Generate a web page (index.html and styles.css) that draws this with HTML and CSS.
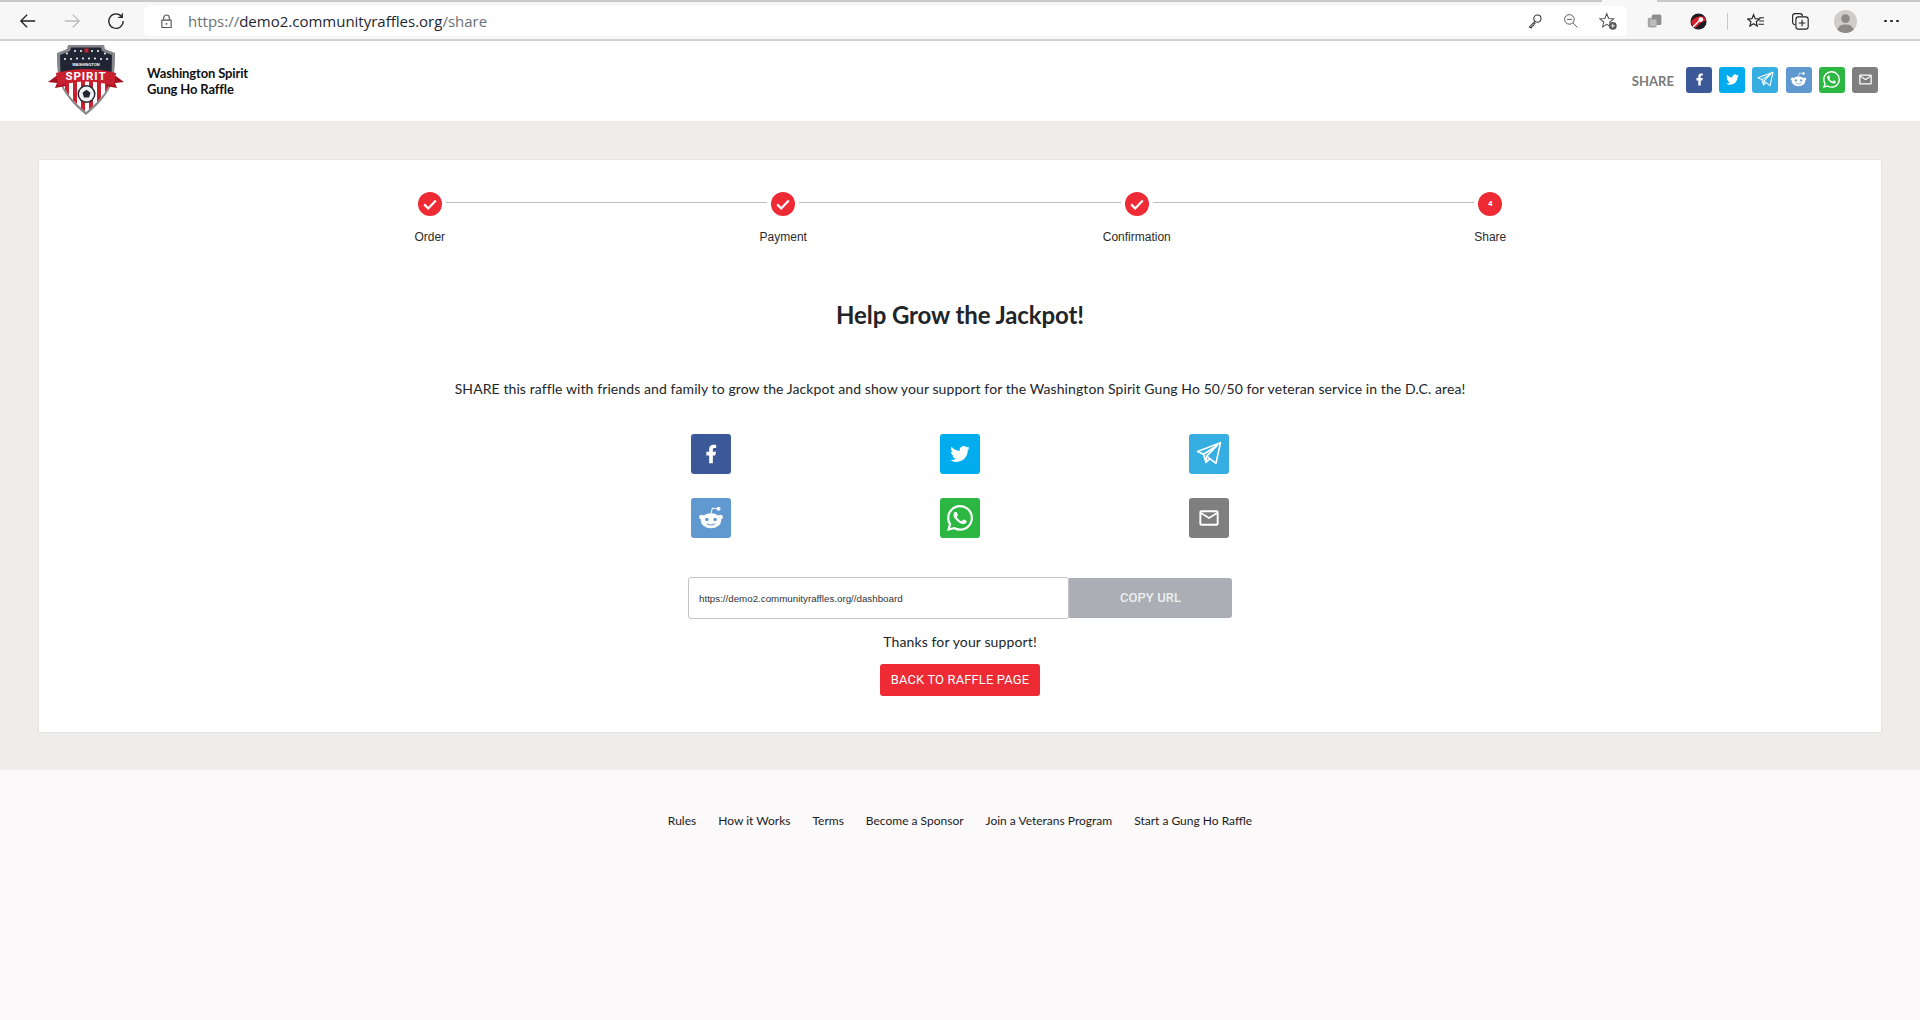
FILE: index.html
```html
<!DOCTYPE html>
<html lang="en">
<head>
<meta charset="utf-8">
<title>Share - Washington Spirit Gung Ho Raffle</title>
<link rel="stylesheet" href="styles.css">
</head>
<body>
<svg class="defs" aria-hidden="true">
  <symbol id="i-fb" viewBox="-2 -2 28 28"><path fill="#fff" d="M14 13.5h2.5l1-4H14v-2c0-1.03 0-2 2-2h1.5V2.14c-.326-.043-1.557-.14-2.857-.14C11.928 2 10 3.657 10 6.7v2.8H7v4h3V22h4v-8.5z"/></symbol>
  <symbol id="i-tw" viewBox="-4 -4 32 32"><path fill="#fff" d="M23.953 4.57a10 10 0 01-2.825.775 4.958 4.958 0 002.163-2.723c-.951.555-2.005.959-3.127 1.184a4.92 4.92 0 00-8.384 4.482C7.69 8.095 4.067 6.13 1.64 3.162a4.822 4.822 0 00-.666 2.475c0 1.71.87 3.213 2.188 4.096a4.904 4.904 0 01-2.228-.616v.06a4.923 4.923 0 003.946 4.827 4.996 4.996 0 01-2.212.085 4.936 4.936 0 004.604 3.417 9.867 9.867 0 01-6.102 2.105c-.39 0-.779-.023-1.17-.067a13.995 13.995 0 007.557 2.209c9.053 0 13.998-7.496 13.998-13.985 0-.21 0-.42-.015-.63A9.935 9.935 0 0024 4.59z"/></symbol>
  <symbol id="i-tg" viewBox="0 0 24 24"><path fill="none" stroke="#fff" stroke-width="1.5" stroke-linejoin="round" d="M22.6 1.6 1.4 9.6l5.6 2.6L19.6 4 9.8 14l8.6 6.6zM7 12.2l2.2 7.6.6-5.8M9.2 19.8l3.4-3.3"/></symbol>
  <symbol id="i-rd" viewBox="0 0 24 24">
    <ellipse cx="12" cy="14.6" rx="9.4" ry="6.9" fill="#fff"/>
    <circle cx="3.4" cy="11.4" r="2.3" fill="#fff"/><circle cx="20.6" cy="11.4" r="2.3" fill="#fff"/>
    <circle cx="19" cy="3.4" r="1.8" fill="#fff"/>
    <path fill="none" stroke="#fff" stroke-width=".9" d="M12 8l1.3-5.2L18 3.6"/>
    <circle cx="8.2" cy="13.4" r="1.6" fill="#5f99cf"/><circle cx="15.8" cy="13.4" r="1.6" fill="#5f99cf"/>
    <path fill="none" stroke="#5f99cf" stroke-width="1" stroke-linecap="round" d="M8.6 17.4c2 1.3 4.8 1.3 6.8 0"/>
  </symbol>
  <symbol id="i-wa" viewBox="0 0 24 24"><path fill="#fff" d="M17.472 14.382c-.297-.149-1.758-.867-2.03-.967-.273-.099-.471-.148-.67.15-.197.297-.767.966-.94 1.164-.173.199-.347.223-.644.075-.297-.15-1.255-.463-2.39-1.475-.883-.788-1.48-1.761-1.653-2.059-.173-.297-.018-.458.13-.606.134-.133.298-.347.446-.52.149-.174.198-.298.298-.497.099-.198.05-.371-.025-.52-.075-.149-.669-1.612-.916-2.207-.242-.579-.487-.5-.669-.51-.173-.008-.371-.01-.57-.01-.198 0-.52.074-.792.372-.272.297-1.04 1.016-1.04 2.479 0 1.462 1.065 2.875 1.213 3.074.149.198 2.096 3.2 5.077 4.487.709.306 1.262.489 1.694.625.712.227 1.36.195 1.871.118.571-.085 1.758-.719 2.006-1.413.248-.694.248-1.289.173-1.413-.074-.124-.272-.198-.57-.347m-5.421 7.403h-.004a9.87 9.87 0 01-5.031-1.378l-.361-.214-3.741.982.998-3.648-.235-.374a9.86 9.86 0 01-1.51-5.26c.001-5.45 4.436-9.884 9.888-9.884 2.64 0 5.122 1.03 6.988 2.898a9.825 9.825 0 012.893 6.994c-.003 5.45-4.437 9.884-9.885 9.884m8.413-18.297A11.815 11.815 0 0012.05 0C5.495 0 .16 5.335.157 11.892c0 2.096.547 4.142 1.588 5.945L.057 24l6.305-1.654a11.882 11.882 0 005.683 1.448h.005c6.554 0 11.89-5.335 11.893-11.893a11.821 11.821 0 00-3.48-8.413z"/></symbol>
  <symbol id="i-ml" viewBox="-1.5 -1.5 27 27"><path fill="#fff" d="M20 4H4c-1.1 0-1.99.9-1.99 2L2 18c0 1.1.9 2 2 2h16c1.1 0 2-.9 2-2V6c0-1.1-.9-2-2-2zm0 14H4V8l8 5 8-5v10zm-8-7L4 6h16l-8 5z"/></symbol>
  <symbol id="i-ck" viewBox="0 0 24 24"><path fill="none" stroke="#fff" stroke-width="2.2" d="M6.2 12.4l4 4 7.6-7.8"/></symbol>
</svg>

<div class="chrome">
  <div class="tabstrip"><span class="tab-a"></span><span class="tab-b"></span></div>
  <div class="toolbar">
    <div class="nav">
      <svg class="ti" viewBox="0 0 20 20"><path class="ln" d="M18 10H2M9 3l-7 7 7 7"/></svg>
      <svg class="ti dim" viewBox="0 0 20 20"><path class="ln" d="M2 10h16M11 3l7 7-7 7"/></svg>
      <svg class="ti" viewBox="0 0 20 20"><path class="ln" d="M16.5 5.5A8 8 0 1 0 18 10M17 1.5v4.500h-4.500"/></svg>
    </div>
    <div class="omnibox">
      <svg class="lock" viewBox="0 0 14 16"><path class="ln thin" d="M2 6.500h10v8H2zM4 6.500V4a3 3 0 0 1 6 0v2.500"/><circle cx="7" cy="10.500" r="1" fill="#555"/></svg>
      <span class="url"><span class="url-s">https://</span><span class="url-h">demo2.communityraffles.org</span><span class="url-s">/share</span></span>
      <span class="spring"></span>
      <svg class="oi" viewBox="0 0 20 20"><circle class="ln mid" cx="13" cy="7" r="4.500"/><path class="ln mid" d="M10 10.500 3 17.500l2.500 1 1-2 2-1 .5-2 1.500-1"/></svg>
      <svg class="oi" viewBox="0 0 20 20"><circle class="ln thin" cx="8" cy="8" r="6"/><path class="ln thin" d="M12.500 12.500 18 18M5 8h6"/></svg>
      <svg class="oi" viewBox="0 0 22 22"><path class="ln thin" d="M9 2l2.200 5.500 5.800.4-4.500 3.700 1.400 5.600L9 14.200l-4.900 3 1.400-5.600L1 7.900l5.800-.4z"/><circle cx="16" cy="16" r="4.500" fill="#555"/><path stroke="#fff" d="M13.500 16h5M16 13.500v5"/></svg>
    </div>
    <div class="tools">
      <svg class="tool-a" viewBox="0 0 20 20"><rect x="1" y="6" width="11" height="12" rx="2" fill="#a5a5a5"/><rect x="6" y="2" width="12" height="13" rx="2" fill="#8e8e8e"/><rect x="4" y="8" width="8" height="8" rx="1" fill="#bdbdbd"/></svg>
      <svg class="tool-b" viewBox="0 0 18 18"><circle cx="9" cy="9" r="8.500" fill="#1a1a22"/><path d="M1 9c3-4 8-7 14-5l2 4-5 2-6 6-3-2z" fill="#d3202f"/><circle cx="11.500" cy="7" r="2.500" fill="#fff"/><path d="M3 15 10 8" stroke="#fff" stroke-width="1.500"/></svg>
      <span class="sep"></span>
      <svg class="tool-c" viewBox="0 0 22 20"><path class="ln" d="M8 2l2 5 5.500.4-4.200 3.500 1.300 5.400L8 13.400l-4.600 2.900 1.300-5.400L.5 7.400 6 7z"/><path class="ln" d="M15 6h6M15 10h6M14 14h7"/></svg>
      <svg class="tool-d" viewBox="0 0 22 22"><path class="ln" d="M5 15.500A3 3 0 0 1 2 12.500V5a3 3 0 0 1 3-3h6a3 3 0 0 1 3 3"/><rect class="ln" x="6" y="6" width="15" height="15" rx="3"/><path class="ln" d="M13.500 9.500v8M9.500 13.500h8"/></svg>
      <svg class="tool-e" viewBox="0 0 24 24"><circle cx="12" cy="12" r="12" fill="#cfccc9"/><circle cx="12" cy="9" r="4.500" fill="#8d8a87"/><path d="M3.500 20.500C5 16 8 15 12 15s7 1 8.500 5.500A12 12 0 0 1 3.500 20.500z" fill="#8d8a87"/></svg>
      <span class="dots"><i></i><i></i><i></i></span>
    </div>
  </div>
</div>

<header class="site-head">
  <svg class="logo" viewBox="0 0 76 72" role="img" aria-label="Washington Spirit crest">
    <defs><clipPath id="low"><path d="M13 30H63V36C60 48 48 60 38 68 28 60 16 48 13 36Z"/></clipPath></defs>
    <path d="M9 9 19 5 20 1 H56 L57 5 67 9 C67 16 67 26 65 36 61 50 49 62 38 71 27 62 15 50 11 36 9 26 9 16 9 9Z" fill="#85878a"/>
    <path d="M12 11 22 7 23 3.500H53L54 7 64 11 63.500 32H12.500Z" fill="#1f2533"/>
    <g fill="#fff"><circle cx="19" cy="9.500" r="1"/><circle cx="27" cy="7" r="1"/><circle cx="33" cy="7" r="1"/><circle cx="44" cy="7" r="1"/><circle cx="50" cy="7" r="1"/><circle cx="57" cy="9.500" r="1"/><circle cx="17" cy="15" r="1"/><circle cx="23" cy="15" r="1"/><circle cx="29" cy="14.500" r="1"/><circle cx="35" cy="14.500" r="1"/><circle cx="41" cy="14.500" r="1"/><circle cx="47" cy="14.500" r="1"/><circle cx="53" cy="15" r="1"/><circle cx="59" cy="15" r="1"/></g>
    <rect x="36.500" y="4.500" width="4" height="4" fill="#c8202f"/>
    <text class="logo-small" x="38" y="22.300" text-anchor="middle">WASHINGTON</text>
    <g clip-path="url(#low)"><rect x="12" y="30" width="52" height="40" fill="#fff"/><path d="M17 30h4v40h-4zM25 30h4v40h-4zM33 30h4v40h-4zM41 30h4v40h-4zM49 30h4v40h-4zM57 30h4v40h-4z" fill="#c8202f"/></g>
    <path d="M11 30 0 38 9 39 7 44 18 42ZM65 30 76 38 67 39 69 44 58 42Z" fill="#a5121f"/>
    <path d="M8 29Q38 21 68 29L66 42Q38 33 10 42Z" fill="#c8202f"/>
    <text class="logo-big" x="38" y="35.500" text-anchor="middle">SPIRIT</text>
    <circle cx="38.500" cy="50" r="9" fill="#1f2533"/><circle cx="38.500" cy="50" r="7.500" fill="#f2f2f2"/><path d="M38.500 45.800l4 2.900-1.500 4.700h-5l-1.500-4.700z" fill="#1f2533"/>
  </svg>
  <div class="brand">Washington Spirit<br>Gung Ho Raffle</div>
  <div class="head-share">
    <span class="head-share-label">SHARE</span>
    <a class="sb sb-small fb"><svg class="sg"><use href="#i-fb"/></svg></a>
    <a class="sb sb-small tw"><svg class="sg"><use href="#i-tw"/></svg></a>
    <a class="sb sb-small tg"><svg class="sg"><use href="#i-tg"/></svg></a>
    <a class="sb sb-small rd"><svg class="sg"><use href="#i-rd"/></svg></a>
    <a class="sb sb-small wa"><svg class="sg"><use href="#i-wa"/></svg></a>
    <a class="sb sb-small ml"><svg class="sg"><use href="#i-ml"/></svg></a>
  </div>
</header>

<main class="main">
  <section class="card">
    <ol class="steps">
      <li class="step"><span class="dot"><svg class="ck"><use href="#i-ck"/></svg></span><span class="step-label">Order</span></li>
      <li class="step"><span class="link"></span><span class="dot"><svg class="ck"><use href="#i-ck"/></svg></span><span class="step-label">Payment</span></li>
      <li class="step"><span class="link"></span><span class="dot"><svg class="ck"><use href="#i-ck"/></svg></span><span class="step-label">Confirmation</span></li>
      <li class="step"><span class="link"></span><span class="dot dot-num">4</span><span class="step-label">Share</span></li>
    </ol>
    <h1 class="title">Help Grow the Jackpot!</h1>
    <p class="lead">SHARE this raffle with friends and family to grow the Jackpot and show your support for the Washington Spirit Gung Ho 50/50 for veteran service in the D.C. area!</p>
    <div class="share-grid">
      <a class="sb fb"><svg class="sg"><use href="#i-fb"/></svg></a>
      <a class="sb tw"><svg class="sg"><use href="#i-tw"/></svg></a>
      <a class="sb tg"><svg class="sg"><use href="#i-tg"/></svg></a>
      <a class="sb rd"><svg class="sg"><use href="#i-rd"/></svg></a>
      <a class="sb wa"><svg class="sg"><use href="#i-wa"/></svg></a>
      <a class="sb ml"><svg class="sg"><use href="#i-ml"/></svg></a>
    </div>
    <div class="copy-row">
      <div class="copy-input">https://demo2.communityraffles.org//dashboard</div>
      <button class="copy-btn">COPY URL</button>
    </div>
    <p class="thanks">Thanks for your support!</p>
    <button class="back-btn">BACK TO RAFFLE PAGE</button>
  </section>
</main>

<footer class="footer">
  <nav class="foot-nav">
    <a>Rules</a><a>How it Works</a><a>Terms</a><a>Become a Sponsor</a><a>Join a Veterans Program</a><a>Start a Gung Ho Raffle</a>
  </nav>
</footer>
</body>
</html>
```
FILE: styles.css
```css
* { box-sizing: border-box; }
html, body { margin: 0; padding: 0; }
body {
  min-height: 100vh;
  display: flex;
  flex-direction: column;
  font-family: Lato, "Liberation Sans", sans-serif;
  color: #212529;
  background: #fff;
  overflow: hidden;
}
.defs { width: 0; height: 0; position: absolute; }

/* browser chrome */
.chrome { height: 41px; background: #f7f7f7; border-bottom: 2px solid #d2d2d2; flex: none; }
.tabstrip { height: 2px; display: flex; background: #f7f7f7; }
.tab-a { width: 1602px; background: #c9c9c9; }
.tab-b { margin-left: 55px; flex: 1; background: #c9c9c9; }
.toolbar { height: 30px; margin-top: 4px; display: flex; align-items: center; }
.nav { width: 144px; flex: none; display: flex; align-items: center; gap: 26px; padding-left: 19px; }
.ti { width: 18px; height: 18px; display: block; }
.dim { opacity: .28; }
.ln { fill: none; stroke: #222; stroke-width: 1.4; }
.thin { stroke: #555; stroke-width: 1.2; }
.mid { stroke: #333; stroke-width: 1.3; }
.omnibox { width: 1483px; height: 30px; background: #fff; border-radius: 5px; display: flex; align-items: center; padding: 0 9px 0 16px; flex: none; }
.lock { width: 13px; height: 15px; flex: none; }
.url { margin-left: 15px; font: 15px/20px "Open Sans", "Noto Sans", sans-serif; white-space: nowrap; }
.url-s { color: #6b6f76; }
.url-h { color: #1c2733; }
.spring { flex: 1; }
.oi { width: 16px; height: 16px; margin-left: 20px; flex: none; }
.oi:last-of-type { width: 19px; height: 19px; }
.tools { flex: 1; position: relative; display: flex; align-items: center; padding-left: 20px; }
.tool-a { width: 16px; height: 16px; margin-left: 0; }
.tool-b { width: 17px; height: 17px; margin-left: 27px; }
.sep { width: 1px; height: 17px; background: #c8c8c8; margin-left: 20px; }
.tool-c { width: 18px; height: 16px; margin-left: 19px; }
.tool-d { width: 18px; height: 18px; margin-left: 26px; }
.tool-e { width: 23px; height: 23px; margin-left: 25px; }
.dots { display: flex; gap: 3.500px; margin-left: 27px; }
.dots i { width: 2.500px; height: 2.500px; background: #222; border-radius: 50%; display: block; }

/* site header */
.site-head { height: 80px; flex: none; display: flex; align-items: center; padding-left: 48px; padding-right: 42px; background: #fff; }
.logo { width: 76px; height: 72px; flex: none; margin-top: 3px; margin-bottom: 5px; }
.logo-small { font: 700 4px "Liberation Sans", sans-serif; fill: #fff; }
.logo-big { font: 700 11.500px Roboto, sans-serif; fill: #fff; letter-spacing: .9px; }
.brand { margin-left: 23px; font-size: 13px; line-height: 16px; font-weight: 700; color: #111; margin-top: -1px; letter-spacing: -.14px; }
.head-share { margin-left: auto; display: flex; align-items: center; gap: 7.200px; margin-top: -3px; }
.head-share-label { font-size: 13px; font-weight: 700; color: #7a7a7a; margin-right: 5px; margin-top: 3px; }

/* share buttons */
.sb { width: 40px; height: 40px; border-radius: 3px; display: flex; align-items: center; justify-content: center; }
.sb-small { width: 26px; height: 26px; }
.sg { display: block; overflow: visible; }
.sb .sg { width: 26px; height: 26px; }
.sb-small .sg { width: 17px; height: 17px; }
.fb { background: #3b5998; }
.tw { background: #00aced; }
.tg { background: #37aee2; }
.rd { background: #5f99cf; }
.wa { background: #2cb742; }
.ml { background: #7f7f7f; }

/* main */
.main { flex: none; background: #eeedeb; padding: 38px 38px 37px; }
.card { height: 574px; background: #fff; border: 1px solid #e4e4e4; border-radius: 2px; display: flex; flex-direction: column; align-items: center; padding-top: 32px; }
.steps { list-style: none; margin: 0; padding: 0; display: grid; grid-template-columns: repeat(4, 353.500px); width: 1414px; }
.step { position: relative; display: flex; flex-direction: column; align-items: center; }
.dot { width: 24px; height: 24px; border-radius: 50%; background: #ee2a35; display: flex; align-items: center; justify-content: center; position: relative; }
.ck { width: 24px; height: 24px; display: block; }
.dot-num { color: #fff; font: 700 8px/1 Roboto, sans-serif; }
.link { position: absolute; top: 10px; left: calc(-50% + 16px); right: calc(50% + 16px); border-top: 1px solid #bdbdbd; }
.step-label { margin-top: 13px; font: 12px/17px "Liberation Sans", sans-serif; color: #2b2b2b; }

.title { margin: 54px 0 0; font-size: 24px; line-height: 30px; font-weight: 700; color: #212529; letter-spacing: -.1px; }
.lead { margin: 49px 0 0; font-size: 14px; line-height: 20px; color: #212529; letter-spacing: .09px; }
.share-grid { margin-top: 35px; width: 538px; display: grid; grid-template-columns: 40px 40px 40px; justify-content: space-between; row-gap: 24px; }
.copy-row { margin-top: 39px; width: 544px; display: flex; align-items: center; }
.copy-input { width: 381px; height: 42px; border: 1px solid #c4c4c4; border-radius: 3px; padding: 0 10px; display: flex; align-items: center; font: 9.750px "Liberation Sans", sans-serif; color: #333; }
.copy-btn { width: 163px; height: 40px; border: 0; background: #acaeb5; border-radius: 0 3px 3px 0; color: #eef0f2; font: 500 13px Roboto, sans-serif; letter-spacing: .05px; padding-bottom: 2px; }
.thanks { margin: 13px 0 0; font-size: 14px; line-height: 20px; color: #212529; letter-spacing: .12px; }
.back-btn { margin-top: 12px; width: 160px; height: 32px; border: 0; background: #ee2a35; border-radius: 3px; color: #fff; font: 400 13px Roboto, sans-serif; letter-spacing: .12px; padding: 0 0 1px; }

/* footer */
.footer { flex: 1; background: #fbf9fa; padding-top: 42px; }
.foot-nav { display: flex; justify-content: center; gap: 22px; font-size: 12px; line-height: 17px; color: #1c1c1c; }
```
